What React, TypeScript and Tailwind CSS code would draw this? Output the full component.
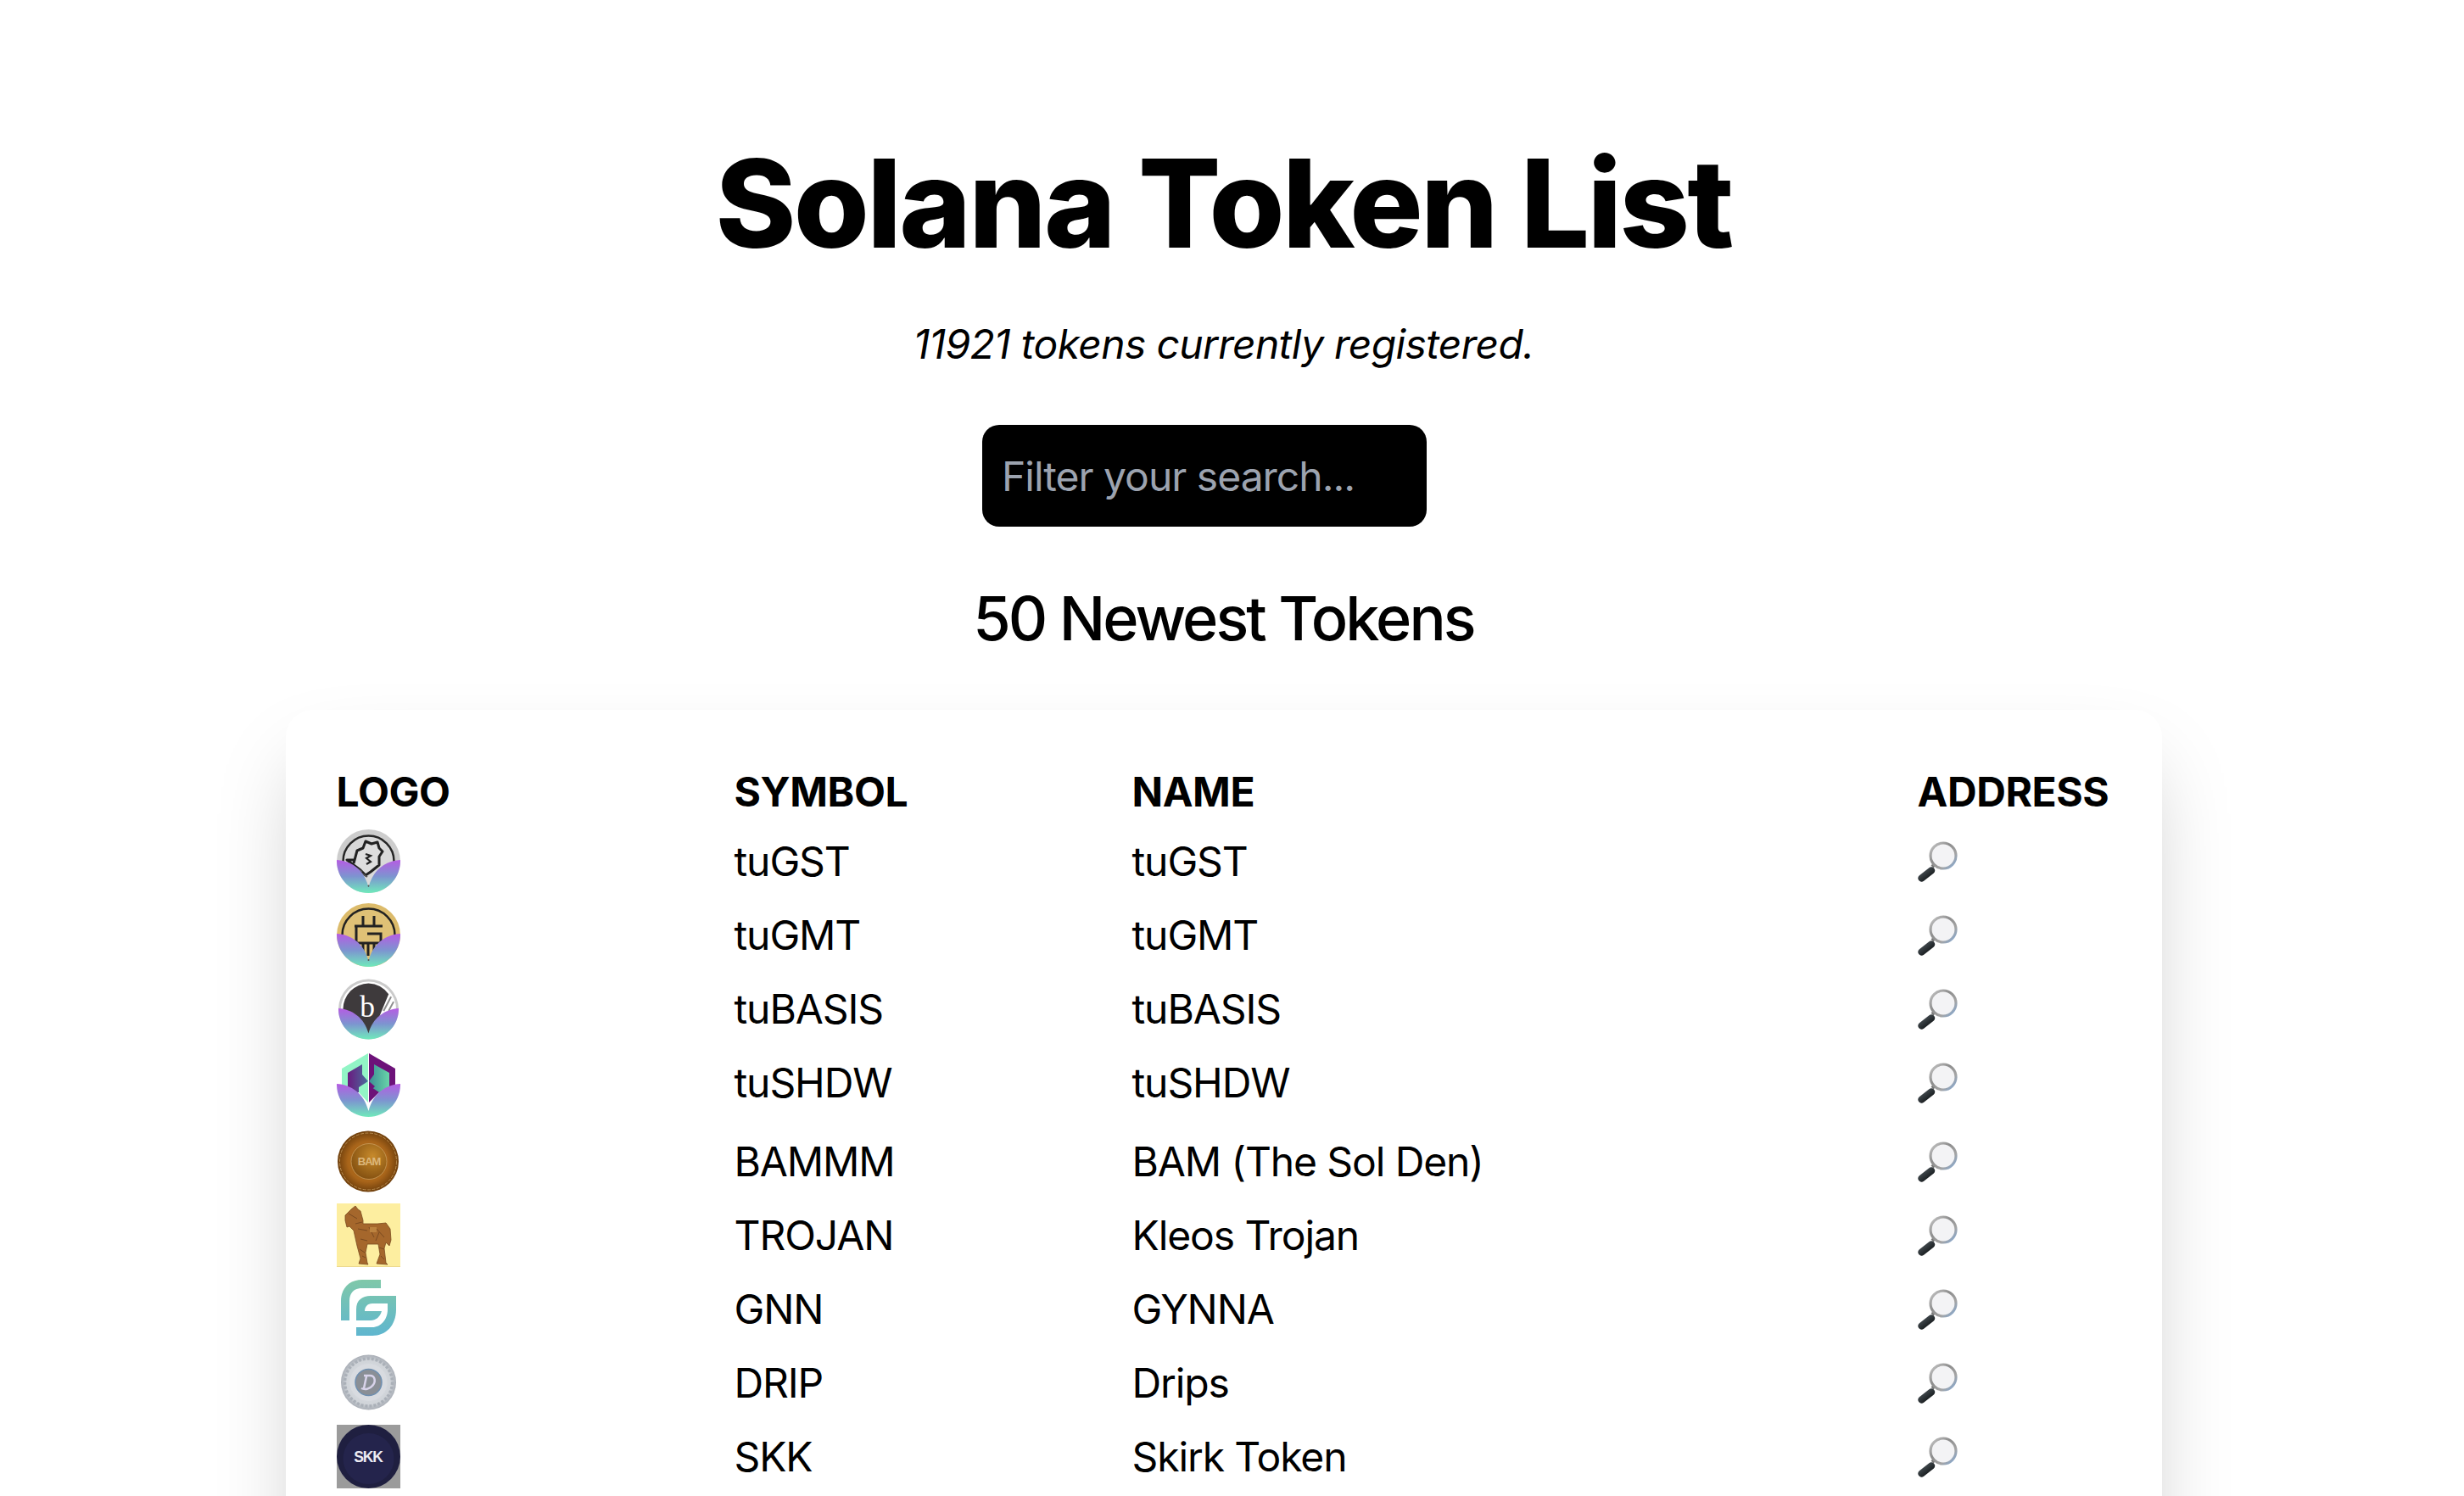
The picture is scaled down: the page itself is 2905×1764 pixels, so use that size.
import React from "react";

const Lotus = ({ id }: { id: string }) => (
  <>
    <defs>
      <linearGradient id={id} x1="0" y1="0" x2="0" y2="1">
        <stop offset="0" stopColor="#b65ce3" />
        <stop offset="0.5" stopColor="#7d94d0" />
        <stop offset="1" stopColor="#6feabb" />
      </linearGradient>
    </defs>
    <path d="M0 36 C17 37 32 47 37.5 68 C43 47 58 37 75 36 C75.5 58 58 75 37.5 75 C17 75 -0.5 58 0 36 Z" fill={`url(#${id})`} />
  </>
);

const Logo1 = () => (
  <svg viewBox="0 0 75 75" className="w-[75px] h-[75px]">
    <circle cx="37.5" cy="37.5" r="37.5" fill="#cdcdcd" />
    <circle cx="37.5" cy="37.5" r="30" fill="#d9d9d9" stroke="#262626" strokeWidth="2.5" />
    <path d="M20 40 L24 25 L31 22 L34 14 L41 17 L48 15 L50 22 L54 26 L50 32 L50 42 L40 50 L34 54 L28 48 L12 36 L22 36" fill="#dedede" stroke="#222" strokeWidth="3" strokeLinejoin="round" />
    <path d="M34 29 L40 31 L35 34 L40 38 L35 41" fill="none" stroke="#222" strokeWidth="2.2" />
    <path d="M14 40 L30 50 M20 46 L36 56" stroke="#555" strokeWidth="2" />
    <Lotus id="l1" />
    <circle cx="37.5" cy="66.5" r="1" fill="#555" />
  </svg>
);

const Logo2 = () => (
  <svg viewBox="0 0 75 75" className="w-[75px] h-[75px]">
    <circle cx="37.5" cy="37.5" r="37.5" fill="#dcbb6b" />
    <circle cx="37.5" cy="37.5" r="31" fill="#dfc176" stroke="#222" strokeWidth="2.5" />
    <path d="M31 15 V26 M44 15 V26 M21 27 H54 M23 27 V47 H52 V36 H36 M31 47 V60 M44 47 V60 M37 47 V62" fill="none" stroke="#222" strokeWidth="3" />
    <Lotus id="l2" />
    <circle cx="37.5" cy="67" r="1" fill="#555" />
  </svg>
);

const Logo3 = () => (
  <svg viewBox="0 0 72 72" className="w-[71px] h-[72px]">
    <circle cx="36" cy="36" r="36" fill="#cbcbcb" />
    <circle cx="36" cy="36" r="33" fill="#ffffff" />
    <path d="M36 5 A31 31 0 0 0 5.5 36 A31 31 0 0 0 40 66.5 L60 18 A31 31 0 0 0 36 5 Z" fill="#3e3a3c" />
    <path d="M54 38 L63 21 M60 38 L66 27" stroke="#8d8d8d" strokeWidth="2" />
    <text x="34" y="45" textAnchor="middle" fontSize="36" fill="#ffffff" fontFamily="'Liberation Serif', serif">b</text>
    <path d="M0 35 C16 36 31 46 36 65 C41 46 56 36 72 35 C72.5 56 56 72 36 72 C16 72 -0.5 56 0 35 Z" fill="url(#l3)" />
    <defs>
      <linearGradient id="l3" x1="0" y1="0" x2="0" y2="1">
        <stop offset="0" stopColor="#b65ce3" />
        <stop offset="0.5" stopColor="#7d94d0" />
        <stop offset="1" stopColor="#6feabb" />
      </linearGradient>
    </defs>
  </svg>
);

const Logo4 = () => (
  <svg viewBox="0 0 75 75" className="w-[75px] h-[75px] translate-y-[3px]">
    <defs>
      <linearGradient id="s1" x1="0" y1="0" x2="1" y2="0">
        <stop offset="0" stopColor="#6a1a80" />
        <stop offset="1" stopColor="#4a6d9c" />
      </linearGradient>
      <linearGradient id="s2" x1="0" y1="0" x2="1" y2="0">
        <stop offset="0" stopColor="#3d8f95" />
        <stop offset="1" stopColor="#68d5a8" />
      </linearGradient>
    </defs>
    <path d="M37 0 L6 18 V45 H37 Z" fill="#92f5c6" />
    <path d="M38 0 L69 18 V45 H38 Z" fill="#6d1279" />
    <path d="M13 23 L30 13 V25 L37 33 L30 39 L37 46 H13 Z" fill="url(#s1)" />
    <path d="M44 13 L62 23 V46 H38 L45 39 L38 33 L44 25 Z" fill="url(#s2)" />
    <path d="M26 40 L37 33 L37 58 L26 46 Z" fill="#92f5c6" />
    <path d="M38 38 L50 46 L38 58 Z" fill="#6d1279" />
    <Lotus id="l4" />
  </svg>
);

const Logo5 = () => (
  <svg viewBox="0 0 72 72" className="w-[72px] h-[75px]">
    <defs>
      <radialGradient id="b1" cx="0.5" cy="0.5" r="0.55">
        <stop offset="0" stopColor="#b9761b" />
        <stop offset="0.6" stopColor="#a9651a" />
        <stop offset="1" stopColor="#5e3408" />
      </radialGradient>
      <radialGradient id="b2" cx="0.6" cy="0.35" r="0.75">
        <stop offset="0" stopColor="#c78a2b" />
        <stop offset="1" stopColor="#7c4a0e" />
      </radialGradient>
    </defs>
    <circle cx="36" cy="36" r="36" fill="url(#b1)" />
    <circle cx="36" cy="36" r="33.5" fill="none" stroke="#c9a062" strokeWidth="0.8" strokeDasharray="4 1.5" />
    <circle cx="37" cy="36" r="21" fill="url(#b2)" stroke="#d0a565" strokeWidth="0.7" />
    <text x="37" y="40.5" textAnchor="middle" fontSize="13" fill="#dcb77b" fontFamily="'Liberation Sans', sans-serif" fontWeight="700">BAM</text>
  </svg>
);

const Logo6 = () => (
  <svg viewBox="0 0 75 75" className="w-[75px] h-[75px]">
    <rect width="75" height="75" fill="#fdeea0" />
    <rect y="74" width="75" height="1" fill="#ecd98e" />
    <path d="M10 14 L17 7 L22 3 L25 7 L28 9 L31 20 L31 24 L48 24 L58 23 L63 30 L64 43 L62 50 L58 46 L56 53 L58 70 L60 72 L47 71 L51 60 L49 48 L36 48 L34 58 L36 70 L37 72 L26 71 L28 65 L24 50 L20 32 L15 27 L12 28 L10 20 Z" fill="#a5672c" stroke="#7a4a20" strokeWidth="0.8" />
    <path d="M14 12 L24 18 M22 24 L30 22 M25 30 L36 32 M38 28 L44 40 M47 30 L56 40 M28 42 L36 44 M50 34 L46 44 M27 54 L33 58 M30 62 L34 64 M50 52 L56 54 M52 62 L56 66" stroke="#7a4a20" strokeWidth="1" />
    <rect x="39" y="28" width="8" height="6" fill="#bc8340" />
  </svg>
);

const Logo7 = () => (
  <svg viewBox="0 0 75 75" className="w-[75px] h-[75px]">
    <defs>
      <linearGradient id="g1" gradientUnits="userSpaceOnUse" x1="0" y1="3" x2="0" y2="69">
        <stop offset="0" stopColor="#7fc8a9" />
        <stop offset="1" stopColor="#5fb6cf" />
      </linearGradient>
    </defs>
    <path d="M52 3 V13 H30 C20 13 15 19 15 28 V51 H5 V28 C5 13 15 3 30 3 Z" fill="url(#g1)" />
    <path d="M23 51 V38 C23 27 30 22 40 22 H70 V38 C70 57 58 69 42 69 H23 V59 H42 C52 59 60 50 60 38 V31 H42 C36 31 33 35 33 40 H53 C51 47 46 51 40 51 Z" fill="url(#g1)" />
  </svg>
);

const Logo8 = () => (
  <svg viewBox="0 0 75 75" className="w-[75px] h-[75px]">
    <defs>
      <radialGradient id="d1" cx="0.5" cy="0.5" r="0.5">
        <stop offset="0" stopColor="#e3e6ea" />
        <stop offset="0.8" stopColor="#cfd3d8" />
        <stop offset="1" stopColor="#a9aeb6" />
      </radialGradient>
    </defs>
    <circle cx="37.5" cy="37" r="32.5" fill="url(#d1)" />
    <circle cx="37.5" cy="37" r="28" fill="none" stroke="#aab0b8" strokeWidth="3.5" strokeDasharray="3 2" />
    <circle cx="37.5" cy="37" r="22" fill="#d8dbe0" />
    <circle cx="37.5" cy="37" r="15.5" fill="#8a8f96" stroke="#6f8fb0" strokeWidth="1.5" />
    <path d="M32 29 H39 C46 29 46 37 42 41 C39 45 33 46 29 44 M35 30 L32 44" fill="none" stroke="#d8d3ea" strokeWidth="2.5" />
  </svg>
);

const Logo9 = () => (
  <svg viewBox="0 0 75 75" className="w-[75px] h-[75px]">
    <rect width="75" height="75" fill="#9b9b9b" />
    <circle cx="37.5" cy="37.5" r="37.5" fill="#1f1f40" />
    <circle cx="37.5" cy="40" r="30" fill="#24244c" />
    <text x="37" y="44" textAnchor="middle" fontSize="17.5" fill="#ecebf2" fontFamily="'Liberation Sans', sans-serif" fontWeight="700">SKK</text>
  </svg>
);

const Glass = () => (
  <svg viewBox="0 0 47 48" className="w-[47px] h-[48px]">
    <defs>
      <linearGradient id="rim" x1="0" y1="0" x2="1" y2="1">
        <stop offset="0" stopColor="#c9c9c9" />
        <stop offset="0.4" stopColor="#8d8d8d" />
        <stop offset="0.7" stopColor="#a4a4a4" />
        <stop offset="1" stopColor="#7fa8d8" />
      </linearGradient>
      <linearGradient id="hnd" x1="0" y1="0" x2="1" y2="1">
        <stop offset="0" stopColor="#4a5257" />
        <stop offset="1" stopColor="#101416" />
      </linearGradient>
    </defs>
    <path d="M17 30 L21 26" stroke="#777" strokeWidth="4" />
    <path d="M4.5 43.5 L16 34.5" stroke="url(#hnd)" strokeWidth="8.5" strokeLinecap="round" />
    <circle cx="30" cy="17" r="15" fill="#f3f3f5" stroke="url(#rim)" strokeWidth="3.2" />
  </svg>
);

const rows: { logo: React.ReactNode; symbol: string; name: string; cls: string }[] = [
  { logo: <Logo1 />, symbol: "tuGST", name: "tuGST", cls: "h-[87px]" },
  { logo: <Logo2 />, symbol: "tuGMT", name: "tuGMT", cls: "h-[87px]" },
  { logo: <Logo3 />, symbol: "tuBASIS", name: "tuBASIS", cls: "h-[87px]" },
  { logo: <Logo4 />, symbol: "tuSHDW", name: "tuSHDW", cls: "h-[93px] pb-[6px]" },
  { logo: <Logo5 />, symbol: "BAMMM", name: "BAM (The Sol Den)", cls: "h-[87px]" },
  { logo: <Logo6 />, symbol: "TROJAN", name: "Kleos Trojan", cls: "h-[87px]" },
  { logo: <Logo7 />, symbol: "GNN", name: "GYNNA", cls: "h-[87px]" },
  { logo: <Logo8 />, symbol: "DRIP", name: "Drips", cls: "h-[87px]" },
  { logo: <Logo9 />, symbol: "SKK", name: "Skirk Token", cls: "h-[87px]" },
];

const cols = "grid grid-cols-[469px_469px_926px_1fr] items-center";

export default function App() {
  return (
    <div className="h-screen overflow-hidden bg-white text-black font-['Inter',sans-serif]">
      <div className="w-[2885px] flex flex-col items-center">
        <h1 className="mt-[160px] text-[144px] leading-[160px] font-extrabold tracking-[-2.7px]">Solana Token List</h1>
        <p className="mt-[50px] text-[48px] leading-[72px] italic tracking-[-0.65px]">11921 tokens currently registered.</p>
        <input
          placeholder="Filter your search..."
          className="mt-[59px] mr-[45px] w-[524px] h-[120px] shrink-0 rounded-[20px] bg-black px-[23px] text-[48px] tracking-[-1px] text-white placeholder:text-[#9ca3af] outline-none"
        />
        <h2 className="mt-[64px] text-[72px] leading-[88px] font-medium tracking-[-2.9px]">50 Newest Tokens</h2>
        <section className="mt-[64px] w-[2212px] shrink-0 rounded-[32px] bg-white px-[60px] pt-[58px] pb-[240px] shadow-[0_50px_100px_-24px_rgba(0,0,0,0.25)] text-[48px] leading-[60px] tracking-[-1.1px]">
          <div className={`${cols} h-[77px] font-bold tracking-[-0.4px]`}>
            <div>LOGO</div>
            <div>SYMBOL</div>
            <div>NAME</div>
            <div>ADDRESS</div>
          </div>
          {rows.map((r) => (
            <div key={r.symbol} className={`${cols} ${r.cls}`}>
              <div className="w-[75px] flex justify-center">{r.logo}</div>
              <div>{r.symbol}</div>
              <div>{r.name}</div>
              <div><Glass /></div>
            </div>
          ))}
        </section>
      </div>
    </div>
  );
}
